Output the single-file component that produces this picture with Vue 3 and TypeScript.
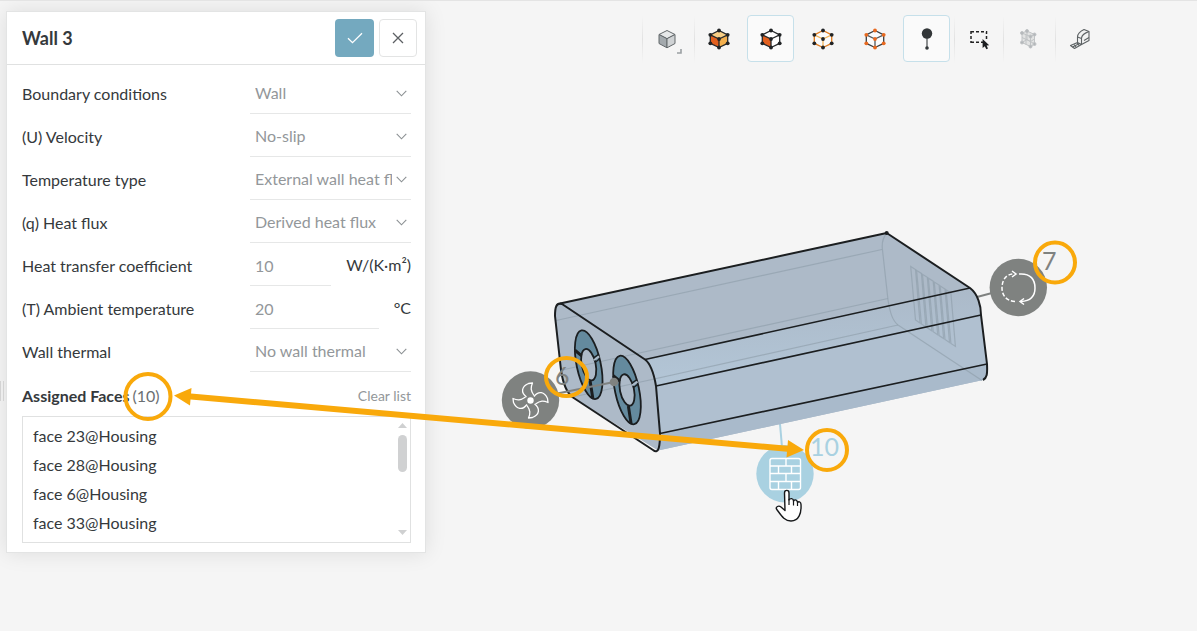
<script setup lang="ts">
import { ref } from 'vue'

interface Field {
  id: string
  label: string
  value: string
  kind: 'select' | 'input'
  unit?: string
}

interface Tool {
  id: string
  label: string
  active?: boolean
  divider?: boolean
  tight?: boolean
}

interface Cube {
  edge: string
  inner: string
  dot: string
  top: string
  left: string
  right: string
}

const fields = ref<Field[]>([
  { id: 'bc', label: 'Boundary conditions', value: 'Wall', kind: 'select' },
  { id: 'velocity', label: '(U) Velocity', value: 'No-slip', kind: 'select' },
  { id: 'temp-type', label: 'Temperature type', value: 'External wall heat flux', kind: 'select' },
  { id: 'flux', label: '(q) Heat flux', value: 'Derived heat flux', kind: 'select' },
  { id: 'htc', label: 'Heat transfer coefficient', value: '10', kind: 'input', unit: 'W/(K·m²)' },
  { id: 'ambient', label: '(T) Ambient temperature', value: '20', kind: 'input', unit: '°C' },
  { id: 'thermal', label: 'Wall thermal', value: 'No wall thermal', kind: 'select' },
])

const faces: string[] = ['face 23@Housing', 'face 28@Housing', 'face 6@Housing', 'face 33@Housing']

const tools: Tool[] = [
  { id: 'render', label: 'Render mode', divider: true },
  { id: 'volume', label: 'Select volumes', divider: true },
  { id: 'face', label: 'Select faces', active: true },
  { id: 'edge', label: 'Select edges' },
  { id: 'vertex', label: 'Select vertices' },
  { id: 'pin', label: 'Show pins', active: true },
  { id: 'box', label: 'Box selection', divider: true },
  { id: 'mesh', label: 'Mesh view', divider: true, tight: true },
  { id: 'measure', label: 'Measure', divider: true },
]

const cubes: Record<string, Cube> = {
  volume: { edge: '#26292b', inner: '#26292b', dot: '#202325', top: '#f8cf86', left: '#e2601f', right: '#f3b04e' },
  face: { edge: '#26292b', inner: '#26292b', dot: '#202325', top: '#fff', left: '#e2601f', right: '#fff' },
  edge: { edge: '#e07a1c', inner: '#f3b45a', dot: '#202325', top: '#fbfbfb', left: '#fbfbfb', right: '#fbfbfb' },
  vertex: { edge: '#3a3e40', inner: '#53585b', dot: '#e8691f', top: '#fbfbfb', left: '#fbfbfb', right: '#fbfbfb' },
}

const cubeDots: [number, number][] = [
  [12, 3.5], [20.7, 7.8], [20.7, 16.3], [12, 20.5], [3.3, 16.3], [3.3, 7.8], [12, 12],
]

const grille: number[] = [0, 1, 2, 3, 4, 5, 6]
</script>

<template>
  <main class="app">
    <div class="handle" aria-hidden="true"></div>

    <form class="panel" @submit.prevent>
      <header class="head">
        <h1>Wall 3</h1>
        <button type="submit" class="btn ok" aria-label="Apply">
          <svg width="16" height="12" viewBox="0 0 16 12"><path d="M1 6.2 5.5 10.7 15 1.2" /></svg>
        </button>
        <button type="button" class="btn cancel" aria-label="Close">
          <svg width="12" height="12" viewBox="0 0 12 12"><path d="M1 1 11 11M11 1 1 11" /></svg>
        </button>
      </header>

      <div class="body">
        <div v-for="f in fields" :key="f.id" class="row">
          <label :for="f.id">{{ f.label }}</label>
          <div class="control">
            <template v-if="f.kind === 'select'">
              <select :id="f.id" v-model="f.value">
                <option :value="f.value">{{ f.value }}</option>
              </select>
              <svg class="chevron" width="11" height="7" viewBox="0 0 11 7"><path d="M.7.8 5.5 5.8 10.3.8" /></svg>
            </template>
            <template v-else>
              <input :id="f.id" v-model="f.value" type="text" />
              <span class="unit">{{ f.unit }}</span>
            </template>
          </div>
        </div>

        <div class="assigned">
          <h2>Assigned Faces</h2>
          <span class="count">(10)</span>
          <button type="button" class="clear">Clear list</button>
        </div>

        <div class="faces">
          <ul>
            <li v-for="face in faces" :key="face">{{ face }}</li>
          </ul>
          <div class="scroll" aria-hidden="true">
            <svg width="9" height="5" viewBox="0 0 9 5"><path d="M0 5 4.5 0 9 5Z" /></svg>
            <div class="track"><div class="thumb"></div></div>
            <svg width="9" height="5" viewBox="0 0 9 5"><path d="M0 0 4.5 5 9 0Z" /></svg>
          </div>
        </div>
      </div>
    </form>

    <nav class="toolbar" aria-label="View tools">
      <button
        v-for="t in tools"
        :key="t.id"
        type="button"
        class="tool"
        :class="{ active: t.active, divider: t.divider, tight: t.tight }"
        :aria-label="t.label"
      >
        <svg width="24" height="24" viewBox="0 0 24 24">
          <g v-if="cubes[t.id]" stroke-width="1.3" stroke-linejoin="round">
            <path d="M12 3.5 20.7 7.8 12 12 3.3 7.8Z" :fill="cubes[t.id].top" />
            <path d="M3.3 7.8 12 12V20.5L3.3 16.3Z" :fill="cubes[t.id].left" />
            <path d="M20.7 7.8 12 12V20.5L20.7 16.3Z" :fill="cubes[t.id].right" />
            <path d="M3.3 7.8 12 12 20.7 7.8M12 12V20.5" fill="none" :stroke="cubes[t.id].inner" />
            <path d="M12 3.5 20.7 7.8V16.3L12 20.5 3.3 16.3V7.8Z" fill="none" :stroke="cubes[t.id].edge" />
            <circle v-for="(d, i) in cubeDots" :key="i" :cx="d[0]" :cy="d[1]" r="1.9" :fill="cubes[t.id].dot" />
          </g>
          <g v-else-if="t.id === 'render'" stroke="#63686b" stroke-width="1" stroke-linejoin="round">
            <path d="M12 3.5 20 7.5 12 11.7 4 7.5Z" fill="#e6e8e9" />
            <path d="M4 7.5 12 11.7V20.8L4 16.5Z" fill="#a3a9ad" />
            <path d="M20 7.5 12 11.7V20.8L20 16.5Z" fill="#cfd2d4" />
          </g>
          <g v-else-if="t.id === 'pin'" fill="#333739">
            <circle cx="12" cy="6.5" r="5.2" />
            <path d="M12 10V21" stroke="#333739" stroke-width="1.1" />
            <circle cx="12" cy="21" r="1.8" />
          </g>
          <g v-else-if="t.id === 'box'">
            <path d="M4 7V4.7H7M9 4.7H12M14 4.7H17M19 4.7H19.5V7M19.5 9V12M4 9V12M4 14V15.3H7M9 15.3H12M14 15.3H16" fill="none" stroke="#222" stroke-width="1.5" />
            <path d="M15.6 12V21L17.8 19.2 19.3 22.3 21 21.5 19.6 18.5 22.2 18.2Z" fill="#1c1e20" />
          </g>
          <g v-else-if="t.id === 'mesh'" stroke="#c0c3c5" stroke-width="1" fill="#e2e3e3">
            <path d="M6 6 11 4 18.500 7.500V17L14.500 19.500 6 15.500Z" />
            <path d="M6 6 14.500 9.500 18.500 7.500M14.500 9.500V19.500M10 7.700V17.500M6 10.500 14.500 14.500 18.500 12M11 4V12.500L6 15.500M11 12.500 18.500 17" fill="none" />
            <g fill="#b3b7ba">
              <circle cx="6" cy="6" r="1.500" /><circle cx="11" cy="4" r="1.500" /><circle cx="18.500" cy="7.500" r="1.500" />
              <circle cx="18.500" cy="17" r="1.500" /><circle cx="14.500" cy="19.500" r="1.500" /><circle cx="6" cy="15.500" r="1.500" />
              <circle cx="14.500" cy="9.500" r="1.500" />
            </g>
          </g>
          <g v-else stroke="#5d6264" stroke-width="1.100" fill="#f1f2f2" stroke-linejoin="round">
            <path d="M2.500 18.500 9.500 15.500 13.500 17.500 6.500 21.500Z" />
            <path d="M4.500 20 11.500 16.500M6 17.500 8 20M9 16 11 18.500" fill="none" />
            <path d="M9.500 15.500V10C9.500 6.500 12 4.500 16 2.500L21 4.500V13.500L13.500 17.500Z" />
            <path d="M13.500 17.500V11.500C13.500 8 16 6.500 21 4.500M9.500 10 13.500 11.500M16 13.500 21 10.500" fill="none" />
          </g>
        </svg>
        <svg v-if="t.id === 'render'" class="corner" width="5" height="5" viewBox="0 0 5 5">
          <path d="M4 0V4H0" />
        </svg>
      </button>
    </nav>

    <svg class="scene" width="1197" height="631" viewBox="0 0 1197 631" role="img" aria-label="Housing model">
      <defs>
        <linearGradient id="top-round" x1="0" y1="0" x2="0.05" y2="1">
          <stop offset="0" stop-color="#abb9c8" />
          <stop offset="1" stop-color="#b3c6d7" />
        </linearGradient>
      </defs>

      <path d="M780 424 782 447" class="blue-stem" />
      <path d="M977 297 992 293" class="grey-stem" />

      <path d="M560 303.500 886.700 233 970 288C978 294 981 306 981 315L987 364C987.500 374 987 378 983 380L658 450.500 573 397.500C564 391 562 377 561 370L555 316C555 308 556 304 560 303.500Z" fill="#adbac8" />
      <path d="M645 359.500 970 288C978 294 981 306 981 315L656 386C654 374 651 364 645 359.500Z" fill="url(#top-round)" />
      <path d="M656 386 981 315 987 364 660 433.500Z" fill="#b0c0d0" />
      <path d="M660 433.500 987 364C987.500 374 987 378 983 380L658 450.500Z" fill="#a9bacb" />

      <g fill="none" stroke="#8f9eab" stroke-opacity=".65" stroke-width="1.200">
        <path d="M556 320.500 882 249.500M562 370 888 298.500M573 397 898 325" />
        <path d="M886.700 233C881 240 882 246 882.500 250L888 300C890 312 892 320 898 325L982 380.500" />
        <path v-for="i in grille" :key="i" d="M910.700 266.500 915.500 320 920 323 915.500 269.500Z" :transform="`translate(${i * 5.9} ${i * 3.9})`" />
      </g>

      <g v-for="(c, i) in [[588.7, 364.7], [627, 390]]" :key="i" :transform="`translate(${c[0]} ${c[1]}) rotate(-12)`" stroke="#1b1e20">
        <path d="M0-35A12 35 0 1 1 0 35A12 35 0 1 1 0-35ZM0-16A7 16 0 1 0 0 16A7 16 0 1 0 0-16Z" fill="#648a9e" fill-rule="evenodd" stroke-width="1.800" />
        <path d="M-10.500-17-5-10M-2 16-3 34" stroke-width="3" />
        <path d="M6-3.500 12-6" stroke="#adbac8" stroke-width="2" />
        <path d="M6-5.500 11.500-8M7-1 12-3.500" stroke-width="1.400" />
      </g>

      <g class="outline">
        <path d="M560 303.500 886.700 233 970 288C978 294 981 306 981 315L987 364C987.500 374 987 378 983 380" />
        <path d="M562 304 645 359.500C651 364 654 374 656 386L660 433.500C660 445 659 455 653 450L573 397.500C564 391 562 377 561 370L555 316C555 308 556 302 562 304Z" />
        <path d="M645 359.500 970 288M656 386 981 315M660 433.500 987 364" stroke-width="1.600" />
      </g>
      <circle cx="886.700" cy="233" r="2" fill="#1b1e20" />

      <path d="M550 395 614 382" class="grey-stem" />
      <circle cx="614" cy="382" r="4.300" fill="#7f8280" />

      <g>
        <circle cx="530.500" cy="400" r="28.700" fill="#7f8280" />
        <g transform="translate(530.500 400.500)" fill="none" stroke="#fff" stroke-width="1.300" stroke-linejoin="round">
          <path
            v-for="a in [0, 90, 180, 270]"
            :key="a"
            :transform="`rotate(${a})`"
            d="M-4-3.500C-10-8-9-14-2-17L2-17.500C0-13 0-10 3.500-5"
          />
          <circle r="3.200" fill="#fff" stroke="none" />
        </g>
      </g>

      <g>
        <circle cx="1018.300" cy="287.500" r="28.700" fill="#7f8280" />
        <g fill="none" stroke="#fff" stroke-width="1.500">
          <path d="M1019 274C1031 273 1035 280 1035 288C1035 296 1031 301 1021 301.500" />
          <path d="M1015 301.500C1006 301 1002 295 1002 288C1002 280 1006 274 1014 274" stroke-dasharray="4 2" />
          <path d="M1012 271 1016 274 1012 277M1024 298.500 1020 301.500 1024 304.500" />
        </g>
      </g>

      <g>
        <circle cx="785" cy="473.700" r="28.700" fill="#a9d1e1" />
        <g fill="none" stroke="#fff" stroke-width="1.400">
          <rect x="770" y="458.500" width="30.500" height="31" rx="2" />
          <path d="M770 466H800.500M770 473.500H800.500M770 481.500H800.500M786 458.500V466M778.500 466V473.500M791.500 466V473.500M786 473.500V481.500M778.500 481.500V489.500M791.500 481.500V489.500" />
        </g>
      </g>

      <g class="tally">
        <text x="555" y="385" fill="#7f8280">6</text>
        <text x="1042" y="270" fill="#7f8280">7</text>
        <text x="810" y="456" fill="#a9d1e1">10</text>
      </g>

      <g class="mark">
        <circle cx="148" cy="396.500" r="22.500" />
        <ellipse cx="566.500" cy="377" rx="20.500" ry="19" />
        <circle cx="1055" cy="262.500" r="20" />
        <circle cx="827" cy="450" r="20" />
        <path d="M188 396.300 790 449" stroke-width="6" />
        <path d="M174 395.500 191.500 388 190 405.500ZM804 450 786.500 457.500 788 440Z" class="head-fill" />
      </g>

      <path
        d="M784.500 493C784.500 489.500 789 489.500 789 493V500C790 498 793.500 498 793.500 501C795 499 797.500 500 797.500 502.500C799 501 801 502 801 504.500C801.500 513 799 521 791 521C784 521 781 515 776.500 509C775.500 507 778.500 505 781 507L785 510.500Z"
        fill="#fff"
        stroke="#16181a"
        stroke-width="1.400"
        stroke-linejoin="round"
      />
      <path d="M789 499V505M793.500 501V505.500M797.500 503V506" stroke="#16181a" stroke-width="1.200" />
    </svg>
  </main>
</template>

<style>
body {
  margin: 0;
  background: #f5f5f5;
}
</style>

<style scoped>
.app {
  position: relative;
  box-sizing: border-box;
  display: flex;
  align-items: flex-start;
  min-height: 100vh;
  padding: 10px 94px 10px 6px;
  border-top: 1px solid #e4e4e4;
  overflow: hidden;
  background: #f5f5f5;
  color: #35393c;
  font: 16px/20px Lato, 'Liberation Sans', sans-serif;
}

.app * {
  box-sizing: border-box;
}

button,
input,
select {
  margin: 0;
  padding: 0;
  border: 0;
  background: none;
  color: inherit;
  font: inherit;
}

.handle {
  position: absolute;
  left: 0;
  top: 380px;
  width: 4px;
  height: 20px;
  border: solid #d3d3d3;
  border-width: 0 1px;
}

.panel {
  flex: none;
  width: 420px;
  border: 1px solid #e3e4e4;
  background: #fff;
  box-shadow: 0 0 20px rgb(0 0 0 / 10%);
}

.head {
  display: flex;
  align-items: center;
  gap: 5px;
  height: 53px;
  padding: 0 8px 0 15px;
  border-bottom: 1px solid #e0e1e1;
}

h1 {
  flex: 1;
  margin: 0;
  padding-bottom: 1px;
  font-size: 18px;
  font-weight: 700;
}

.btn {
  display: grid;
  place-items: center;
  width: 38px;
  height: 38px;
  border-radius: 4px;
}

.btn svg {
  fill: none;
  stroke-width: 1.3;
}

.ok {
  width: 39px;
  background: #74a9bf;
  stroke: #fff;
}

.cancel {
  border: 1px solid #e3e4e4;
  stroke: #5c6063;
}

.body {
  padding: 6px 14px 9px 15px;
}

.row {
  display: flex;
  align-items: center;
  height: 43px;
}

.row label {
  flex: 1;
  padding-top: 2px;
}

.control {
  position: relative;
  display: flex;
  align-items: stretch;
  gap: 15px;
  width: 161px;
  height: 100%;
}

.control select,
.control input {
  flex: 1;
  min-width: 0;
  padding: 2px 5px 0;
  border-bottom: 1px solid #e6e7e7;
  border-radius: 0;
  color: #93979a;
}

.control input {
  padding-top: 4px;
}

.control select {
  appearance: none;
  padding-right: 19px;
}

.chevron {
  position: absolute;
  right: 4px;
  top: 19px;
  fill: none;
  stroke: #8b9093;
  stroke-width: 1.1;
  pointer-events: none;
}

.unit {
  align-self: center;
}

.assigned {
  display: flex;
  align-items: center;
  height: 44px;
  padding-top: 3px;
}

h2 {
  margin: 0;
  font-size: 16px;
  font-weight: 700;
}

.count {
  margin-left: 3px;
  color: #6b6f72;
}

.clear {
  margin-left: auto;
  color: #93979a;
  font-size: 14px;
}

.faces {
  display: flex;
  justify-content: space-between;
  height: 127px;
  padding: 4px 3px 4px 10px;
  border: 1px solid #e0e1e1;
}

ul {
  margin: 0;
  padding: 0;
  list-style: none;
}

li {
  height: 29px;
  line-height: 29px;
}

.scroll {
  display: flex;
  flex-direction: column;
  align-items: center;
  gap: 7px;
  width: 9px;
  padding: 2px 0 3px;
  fill: #cfd0d1;
}

.scroll svg {
  flex: none;
}

.track {
  flex: 1;
}

.thumb {
  width: 9px;
  height: 37px;
  border-radius: 5px;
  background: #d0d1d2;
}

.toolbar {
  display: flex;
  gap: 5px;
  margin: 4px 0 0 auto;
}

.tool {
  position: relative;
  display: grid;
  place-items: center;
  width: 47px;
  height: 47px;
  border: 1px solid transparent;
  border-radius: 4px;
}

.tool.active {
  border-color: #c6e0ea;
  background: #fafafa;
}

.tool.tight {
  margin-left: -3px;
}

.tool.divider::before {
  content: '';
  position: absolute;
  left: -2px;
  top: 0;
  width: 1px;
  height: 47px;
  background: linear-gradient(transparent, #e2e2e2, transparent);
}

.corner {
  position: absolute;
  right: 7px;
  bottom: 7px;
  fill: none;
  stroke: #9ba0a3;
  stroke-width: 1.6;
}

.scene {
  position: absolute;
  left: 0;
  top: -1px;
  pointer-events: none;
}

.outline {
  fill: none;
  stroke: #1b1e20;
  stroke-width: 2;
  stroke-linejoin: round;
}

.grey-stem {
  stroke: #7f8280;
  stroke-width: 2;
}

.blue-stem {
  stroke: #a9d1e1;
  stroke-width: 2;
}

.tally {
  font-size: 25px;
}

.mark {
  fill: none;
  stroke: #f9a90b;
  stroke-width: 4;
}

.head-fill {
  fill: #f9a90b;
  stroke: none;
}
</style>
